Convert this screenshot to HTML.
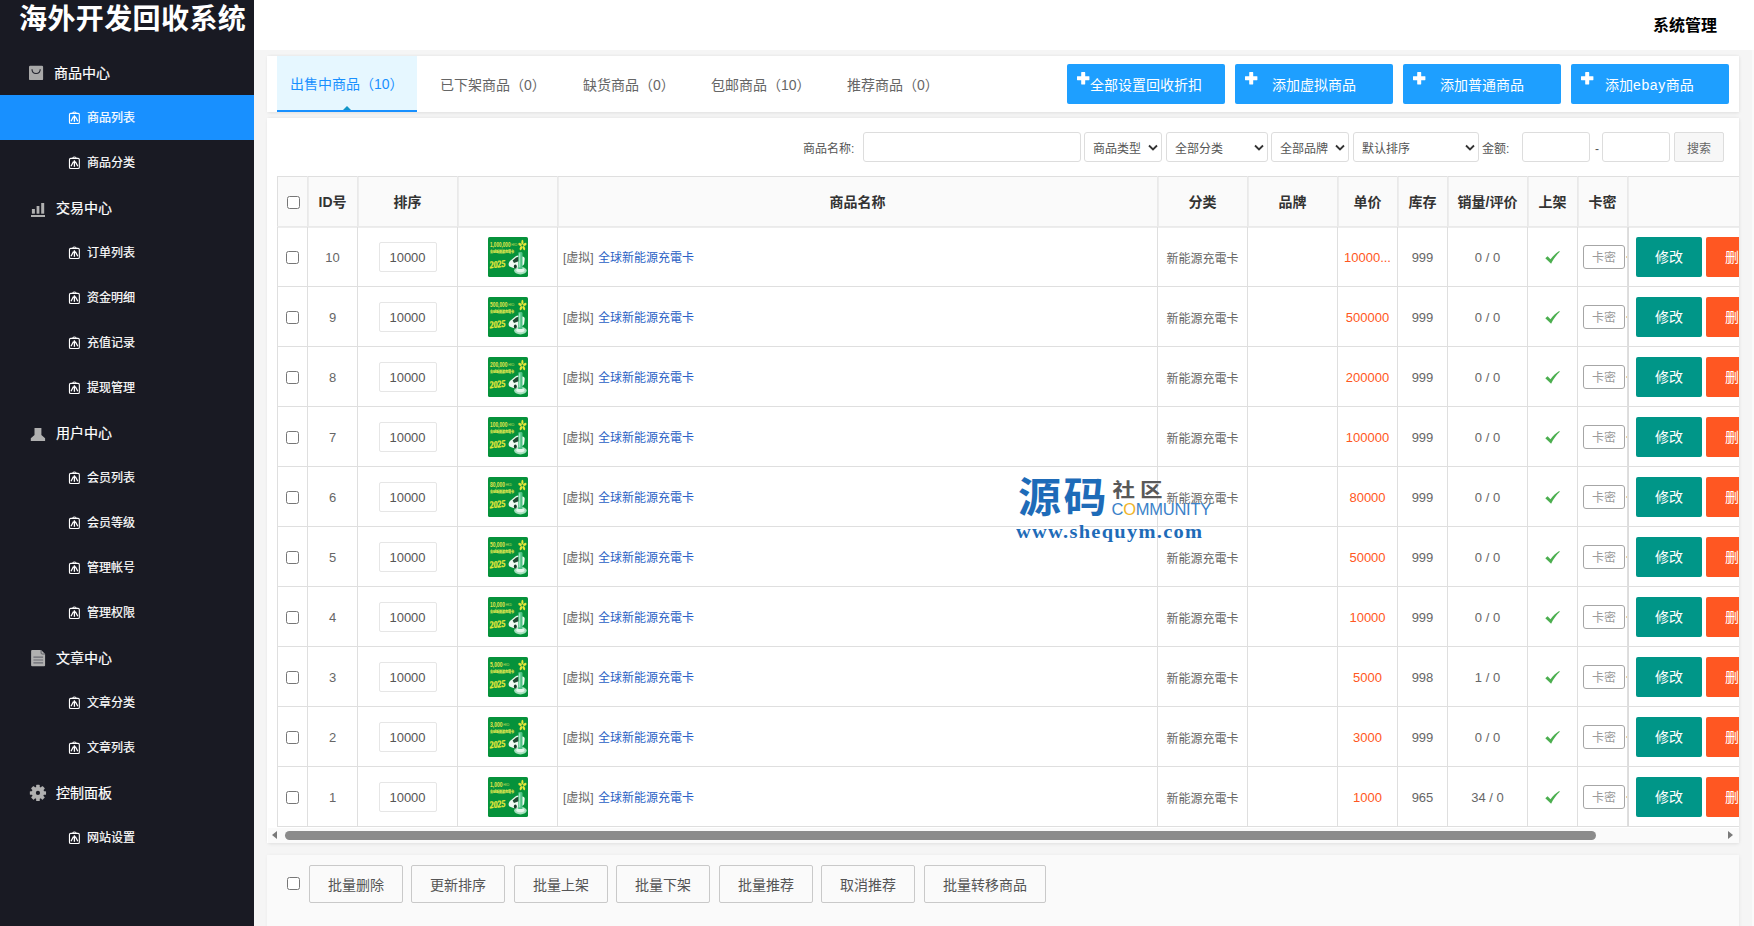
<!DOCTYPE html><html lang="zh-CN"><head><meta charset="utf-8"><title>海外开发回收系统</title><style>
*{box-sizing:border-box}
html,body{margin:0;padding:0}
body{width:1754px;height:926px;overflow:hidden;position:relative;background:#fff;font-family:"Liberation Sans","Noto Sans CJK SC",sans-serif;font-size:12px;color:#666}
.abs{position:absolute}
#side{left:0;top:0;width:254px;height:926px;background:#191a23;color:#fff}
#logo{left:19px;top:0px;font-size:28px;font-weight:bold;line-height:40px;white-space:nowrap;letter-spacing:0.4px}
.grp{left:0;width:254px;height:45px;line-height:45px;font-size:14px;color:#fff;-webkit-text-stroke:.2px #fff}
.grp span{position:absolute;left:56px;top:1px}
.grp svg{position:absolute;left:27px;top:12px}
.sub{left:0;width:254px;height:45px;line-height:45px;font-size:12px;color:#fff;-webkit-text-stroke:.2px #fff}
.sub span{position:absolute;left:87px;top:1px}
.sub svg{position:absolute;left:67px;top:15px}
.sub.on{background:#1890ff}
#top{left:254px;top:0;width:1500px;height:50px;background:#fff}
#top b{position:absolute;left:1399px;top:1px;line-height:50px;font-size:16px;color:#000}
#main{left:254px;top:50px;width:1498px;height:876px;background:#f5f5f5}
.panel{background:#fff;box-shadow:-1px 0 0 #fff,0 0 3px rgba(0,0,0,.05),0 1px 4px rgba(0,0,0,.07)}
.tab{top:0;height:56px;line-height:58px;font-size:14px;color:#666;white-space:nowrap}
.tab.on{background:#e6f7ff;color:#1890ff;border-bottom:2px solid #1890ff;line-height:57px}
.bbtn{top:8px;width:158px;height:40px;background:#1e9fff;border-radius:2px;color:#fff;font-size:14px;line-height:42px;white-space:nowrap}
.inp{height:30px;border:1px solid #ddd;border-radius:3px;background:#fff;top:14px}
.sel{height:30px;border:1px solid #ddd;border-radius:3px;background:#fff;top:14px;font-size:12px;color:#555;line-height:32px;padding-left:8px;white-space:nowrap}
.sel svg{position:absolute;right:3.5px;top:10.5px}
.lab{top:14px;line-height:34px;font-size:12px;color:#555;white-space:nowrap}
table{border-collapse:collapse;table-layout:fixed;position:absolute;left:9px;top:58px;width:1601px}
th,td{border:1px solid #dfdfdf;padding:0;text-align:center;font-size:13px;color:#666;overflow:hidden;white-space:nowrap}
th{height:50px;padding-bottom:2px;background:#fafafa;border-color:#dfdfdf #e9e9e9 #eaeaea #e9e9e9;box-shadow:inset 1px 0 0 #ededed;font-size:14px;font-weight:bold;color:#333}
td{height:60px;padding-top:2px}
td.w{padding-top:0}
th:first-child{border-left-color:#dfdfdf;box-shadow:none}
tr.r1 td{box-shadow:inset 0 1px 0 #ededed}
tr.r1 td.act{box-shadow:inset 1px 0 0 #dcdcdc,inset 0 1px 0 #ededed}
td.nm{text-align:left;padding-left:5px;font-size:12px;padding-top:0}
td.nm a{color:#2a5fc4;text-decoration:none;margin-left:1px}
td.pr{color:#ff5722}
td.cat{font-size:12px;padding-top:1px}
.cb{display:inline-block;width:13px;height:13px;border:1px solid #767676;border-radius:2.5px;background:#fff;vertical-align:middle}
.srt{display:inline-block;width:58px;height:30px;line-height:30px;border:1px solid #e6e6e6;border-radius:2px;font-size:13px;color:#555;vertical-align:middle}
.km{display:inline-block;width:42px;height:24px;line-height:24px;border:1px solid #a6a6a6;border-radius:3px;font-size:12px;color:#999;text-align:center;vertical-align:middle;background:#fff}
td.kmc{text-align:left;padding-left:5px;position:relative}
.dot{position:absolute;left:48px;top:29px;width:2px;height:2px;background:#e0c080;border-radius:1px}
td.act{text-align:left;padding-left:8px;padding-top:0;border-left-color:#d9d9d9;box-shadow:inset 1px 0 0 #dcdcdc}
.edit{display:inline-block;width:66px;height:40px;line-height:40px;background:#009688;color:#fff;font-size:14px;text-align:center;border-radius:2px;vertical-align:middle}
.del{display:inline-block;width:66px;height:40px;line-height:40px;background:#ff5722;color:#fff;font-size:14px;text-align:center;border-radius:2px;vertical-align:middle;margin-left:4px}
.pb{top:10px;height:38px;line-height:38px;border:1px solid #c9c9c9;border-radius:2px;font-size:14px;color:#555;text-align:center;white-space:nowrap}
</style></head><body><div id="side" class="abs"><div id="logo" class="abs">海外开发回收系统</div><div class="grp abs" style="top:50px"><svg width="22" height="22" viewBox="0 0 22 22"><rect x="2" y="3.8" width="14.1" height="14.3" rx="1.2" fill="#a9a9a9"/><path d="M5 7.300c0 5.600 8.200 5.600 8.200 0" fill="none" stroke="#22232d" stroke-width="1.100"/></svg><span style="left:54px">商品中心</span></div><div class="sub abs on" style="top:95px"><svg width="16" height="16" viewBox="0 0 16 16" fill="none" stroke="#fff" stroke-width="1.1"><rect x="2.45" y="3.35" width="9.9" height="10.1" rx="1.3"/><path d="M5.3 3.3c0-1.7 4.2-1.7 4.2 0" stroke-width="1"/><path d="M4 11.300l2.500-4.800M7.400 5.300v6.400M10.800 11.300l-2.500-4.800" stroke-width="1.300"/></svg><span>商品列表</span></div><div class="sub abs" style="top:140px"><svg width="16" height="16" viewBox="0 0 16 16" fill="none" stroke="#fff" stroke-width="1.1"><rect x="2.45" y="3.35" width="9.9" height="10.1" rx="1.3"/><path d="M5.3 3.3c0-1.7 4.2-1.7 4.2 0" stroke-width="1"/><path d="M4 11.300l2.500-4.800M7.400 5.300v6.400M10.800 11.300l-2.500-4.800" stroke-width="1.300"/></svg><span>商品分类</span></div><div class="grp abs" style="top:185px"><svg width="22" height="22" viewBox="0 0 22 22" fill="#b0b0b0"><rect x="4.9" y="12" width="3" height="4.7"/><rect x="9.6" y="9" width="2.8" height="7.7"/><rect x="14.2" y="6" width="3" height="10.7"/><rect x="4" y="18" width="14" height="2"/></svg><span>交易中心</span></div><div class="sub abs" style="top:230px"><svg width="16" height="16" viewBox="0 0 16 16" fill="none" stroke="#fff" stroke-width="1.1"><rect x="2.45" y="3.35" width="9.9" height="10.1" rx="1.3"/><path d="M5.3 3.3c0-1.7 4.2-1.7 4.2 0" stroke-width="1"/><path d="M4 11.300l2.500-4.800M7.400 5.300v6.400M10.800 11.300l-2.500-4.800" stroke-width="1.300"/></svg><span>订单列表</span></div><div class="sub abs" style="top:275px"><svg width="16" height="16" viewBox="0 0 16 16" fill="none" stroke="#fff" stroke-width="1.1"><rect x="2.45" y="3.35" width="9.9" height="10.1" rx="1.3"/><path d="M5.3 3.3c0-1.7 4.2-1.7 4.2 0" stroke-width="1"/><path d="M4 11.300l2.500-4.800M7.400 5.300v6.400M10.800 11.300l-2.500-4.800" stroke-width="1.300"/></svg><span>资金明细</span></div><div class="sub abs" style="top:320px"><svg width="16" height="16" viewBox="0 0 16 16" fill="none" stroke="#fff" stroke-width="1.1"><rect x="2.45" y="3.35" width="9.9" height="10.1" rx="1.3"/><path d="M5.3 3.3c0-1.7 4.2-1.7 4.2 0" stroke-width="1"/><path d="M4 11.300l2.500-4.800M7.400 5.300v6.400M10.800 11.300l-2.500-4.800" stroke-width="1.300"/></svg><span>充值记录</span></div><div class="sub abs" style="top:365px"><svg width="16" height="16" viewBox="0 0 16 16" fill="none" stroke="#fff" stroke-width="1.1"><rect x="2.45" y="3.35" width="9.9" height="10.1" rx="1.3"/><path d="M5.3 3.3c0-1.7 4.2-1.7 4.2 0" stroke-width="1"/><path d="M4 11.300l2.500-4.800M7.400 5.300v6.400M10.800 11.300l-2.500-4.800" stroke-width="1.300"/></svg><span>提现管理</span></div><div class="grp abs" style="top:410px"><svg width="22" height="22" viewBox="0 0 22 22" fill="#b0b0b0"><path d="M7.5 6h6.9v7l3.7 3.3V19H3.8v-2.7L7.5 13z"/></svg><span>用户中心</span></div><div class="sub abs" style="top:455px"><svg width="16" height="16" viewBox="0 0 16 16" fill="none" stroke="#fff" stroke-width="1.1"><rect x="2.45" y="3.35" width="9.9" height="10.1" rx="1.3"/><path d="M5.3 3.3c0-1.7 4.2-1.7 4.2 0" stroke-width="1"/><path d="M4 11.300l2.500-4.800M7.400 5.300v6.400M10.800 11.300l-2.500-4.800" stroke-width="1.300"/></svg><span>会员列表</span></div><div class="sub abs" style="top:500px"><svg width="16" height="16" viewBox="0 0 16 16" fill="none" stroke="#fff" stroke-width="1.1"><rect x="2.45" y="3.35" width="9.9" height="10.1" rx="1.3"/><path d="M5.3 3.3c0-1.7 4.2-1.7 4.2 0" stroke-width="1"/><path d="M4 11.300l2.500-4.800M7.400 5.300v6.400M10.800 11.300l-2.500-4.800" stroke-width="1.300"/></svg><span>会员等级</span></div><div class="sub abs" style="top:545px"><svg width="16" height="16" viewBox="0 0 16 16" fill="none" stroke="#fff" stroke-width="1.1"><rect x="2.45" y="3.35" width="9.9" height="10.1" rx="1.3"/><path d="M5.3 3.3c0-1.7 4.2-1.7 4.2 0" stroke-width="1"/><path d="M4 11.300l2.500-4.800M7.400 5.300v6.400M10.800 11.300l-2.500-4.800" stroke-width="1.300"/></svg><span>管理帐号</span></div><div class="sub abs" style="top:590px"><svg width="16" height="16" viewBox="0 0 16 16" fill="none" stroke="#fff" stroke-width="1.1"><rect x="2.45" y="3.35" width="9.9" height="10.1" rx="1.3"/><path d="M5.3 3.3c0-1.7 4.2-1.7 4.2 0" stroke-width="1"/><path d="M4 11.300l2.500-4.800M7.400 5.300v6.400M10.800 11.300l-2.500-4.800" stroke-width="1.300"/></svg><span>管理权限</span></div><div class="grp abs" style="top:635px"><svg width="22" height="22" viewBox="0 0 22 22"><path d="M4.1 4a1 1 0 0 1 1-1h9l4 4v11.2a1 1 0 0 1-1 1H5.1a1 1 0 0 1-1-1z" fill="#b0b0b0"/><path d="M14.1 3v3a1 1 0 0 0 1 1h3" fill="none" stroke="#55565e" stroke-width="0.9"/><path d="M6.4 10.2h9.7M6.4 13h9.7M6.4 15.8h9.7" stroke="#6a6b73" stroke-width="1.200"/></svg><span>文章中心</span></div><div class="sub abs" style="top:680px"><svg width="16" height="16" viewBox="0 0 16 16" fill="none" stroke="#fff" stroke-width="1.1"><rect x="2.45" y="3.35" width="9.9" height="10.1" rx="1.3"/><path d="M5.3 3.3c0-1.7 4.2-1.7 4.2 0" stroke-width="1"/><path d="M4 11.300l2.500-4.800M7.400 5.300v6.400M10.800 11.300l-2.500-4.800" stroke-width="1.300"/></svg><span>文章分类</span></div><div class="sub abs" style="top:725px"><svg width="16" height="16" viewBox="0 0 16 16" fill="none" stroke="#fff" stroke-width="1.1"><rect x="2.45" y="3.35" width="9.9" height="10.1" rx="1.3"/><path d="M5.3 3.3c0-1.7 4.2-1.7 4.2 0" stroke-width="1"/><path d="M4 11.300l2.500-4.800M7.400 5.300v6.400M10.800 11.300l-2.500-4.800" stroke-width="1.300"/></svg><span>文章列表</span></div><div class="grp abs" style="top:770px"><svg width="22" height="22" viewBox="0 0 22 22"><g fill="#b0b0b0"><circle cx="10.95" cy="10.95" r="6.2"/><rect x="9.15" y="2.850" width="3.600" height="16.200" rx="0.6"/><rect x="9.15" y="2.850" width="3.600" height="16.200" rx="0.6" transform="rotate(45 10.95 10.95)"/><rect x="9.15" y="2.850" width="3.600" height="16.200" rx="0.6" transform="rotate(90 10.95 10.95)"/><rect x="9.15" y="2.850" width="3.600" height="16.200" rx="0.6" transform="rotate(135 10.95 10.95)"/></g><circle cx="10.95" cy="10.95" r="2.1" fill="#191a23"/></svg><span>控制面板</span></div><div class="sub abs" style="top:815px"><svg width="16" height="16" viewBox="0 0 16 16" fill="none" stroke="#fff" stroke-width="1.1"><rect x="2.45" y="3.35" width="9.9" height="10.1" rx="1.3"/><path d="M5.3 3.3c0-1.7 4.2-1.7 4.2 0" stroke-width="1"/><path d="M4 11.300l2.500-4.800M7.400 5.300v6.400M10.800 11.300l-2.500-4.800" stroke-width="1.300"/></svg><span>网站设置</span></div></div><div id="top" class="abs"><b>系统管理</b></div><div id="main" class="abs"><div class="panel abs" style="left:14px;top:6px;width:1471px;height:56px"><div class="tab abs on" style="left:9px;width:140px;padding-left:13px">出售中商品（10）</div><div class="tab abs" style="left:159px;width:134px;padding-left:13px">已下架商品（0）</div><div class="tab abs" style="left:302px;width:120px;padding-left:13px">缺货商品（0）</div><div class="tab abs" style="left:430px;width:128px;padding-left:13px">包邮商品（10）</div><div class="tab abs" style="left:566px;width:120px;padding-left:13px">推荐商品（0）</div><div class="abs" style="left:75px;top:50px;width:0;height:0;border-left:4px solid transparent;border-right:4px solid transparent;border-bottom:4px solid #1296c8"></div><div class="bbtn abs" style="left:799px"><svg class="abs" style="left:9.8px;top:7.7px" width="13" height="13" viewBox="0 0 13 13"><path d="M4.2 0.4a.4.4 0 0 1 .4-.4h3.2a.4.4 0 0 1 .4.4v3.8h3.8a.4.4 0 0 1 .4.4v3.2a.4.4 0 0 1-.4.4H8.2v3.8a.4.4 0 0 1-.4.4H4.6a.4.4 0 0 1-.4-.4V8.2H.4a.4.4 0 0 1-.4-.4V4.6a.4.4 0 0 1 .4-.4h3.8z" fill="#fff"/></svg><span class="abs" style="left:23px;top:0">全部设置回收折扣</span></div><div class="bbtn abs" style="left:967px"><svg class="abs" style="left:9.8px;top:7.7px" width="13" height="13" viewBox="0 0 13 13"><path d="M4.2 0.4a.4.4 0 0 1 .4-.4h3.2a.4.4 0 0 1 .4.4v3.8h3.8a.4.4 0 0 1 .4.4v3.2a.4.4 0 0 1-.4.4H8.2v3.8a.4.4 0 0 1-.4.4H4.6a.4.4 0 0 1-.4-.4V8.2H.4a.4.4 0 0 1-.4-.4V4.6a.4.4 0 0 1 .4-.4h3.8z" fill="#fff"/></svg><span class="abs" style="left:37px;top:0">添加虚拟商品</span></div><div class="bbtn abs" style="left:1135px"><svg class="abs" style="left:9.8px;top:7.7px" width="13" height="13" viewBox="0 0 13 13"><path d="M4.2 0.4a.4.4 0 0 1 .4-.4h3.2a.4.4 0 0 1 .4.4v3.8h3.8a.4.4 0 0 1 .4.4v3.2a.4.4 0 0 1-.4.4H8.2v3.8a.4.4 0 0 1-.4.4H4.6a.4.4 0 0 1-.4-.4V8.2H.4a.4.4 0 0 1-.4-.4V4.6a.4.4 0 0 1 .4-.4h3.8z" fill="#fff"/></svg><span class="abs" style="left:37px;top:0">添加普通商品</span></div><div class="bbtn abs" style="left:1303px"><svg class="abs" style="left:9.8px;top:7.7px" width="13" height="13" viewBox="0 0 13 13"><path d="M4.2 0.4a.4.4 0 0 1 .4-.4h3.2a.4.4 0 0 1 .4.4v3.8h3.8a.4.4 0 0 1 .4.4v3.2a.4.4 0 0 1-.4.4H8.2v3.8a.4.4 0 0 1-.4.4H4.6a.4.4 0 0 1-.4-.4V8.2H.4a.4.4 0 0 1-.4-.4V4.6a.4.4 0 0 1 .4-.4h3.8z" fill="#fff"/></svg><span class="abs" style="left:34px;top:0">添加<span style="letter-spacing:.6px">ebay</span>商品</span></div></div><div class="panel abs" style="left:14px;top:68px;width:1471px;height:725px;overflow:hidden"><div class="lab abs" style="left:535px">商品名称:</div><div class="inp abs" style="left:595px;width:218px"></div><div class="sel abs" style="left:816px;width:78px">商品类型<svg width="10" height="8" viewBox="0 0 10 8"><path d="M1 1.5l4 4 4-4" fill="none" stroke="#333" stroke-width="1.8"/></svg></div><div class="sel abs" style="left:898px;width:102px">全部分类<svg width="10" height="8" viewBox="0 0 10 8"><path d="M1 1.5l4 4 4-4" fill="none" stroke="#333" stroke-width="1.8"/></svg></div><div class="sel abs" style="left:1003px;width:78px">全部品牌<svg width="10" height="8" viewBox="0 0 10 8"><path d="M1 1.5l4 4 4-4" fill="none" stroke="#333" stroke-width="1.8"/></svg></div><div class="sel abs" style="left:1085px;width:126px">默认排序<svg width="10" height="8" viewBox="0 0 10 8"><path d="M1 1.5l4 4 4-4" fill="none" stroke="#333" stroke-width="1.8"/></svg></div><div class="lab abs" style="left:1214px">金额:</div><div class="inp abs" style="left:1254px;width:68px"></div><div class="lab abs" style="left:1327px">-</div><div class="inp abs" style="left:1334px;width:68px"></div><div class="abs" style="left:1406px;top:14px;width:50px;height:30px;line-height:32px;border:1px solid #ddd;border-radius:2px;background:#f7f7f7;color:#666;font-size:12px;text-align:center">搜索</div><table><colgroup><col style="width:30px"><col style="width:50px"><col style="width:100px"><col style="width:100px"><col style="width:600px"><col style="width:90px"><col style="width:90px"><col style="width:60px"><col style="width:50px"><col style="width:80px"><col style="width:50px"><col style="width:50px"><col style="width:250px"></colgroup><tr><th><i class="cb" style="margin-left:1px;position:relative;top:1px"></i></th><th>ID号</th><th>排序</th><th></th><th>商品名称</th><th>分类</th><th>品牌</th><th>单价</th><th>库存</th><th>销量/评价</th><th>上架</th><th>卡密</th><th></th></tr><tr class="r1"><td class="w"><i class="cb"></i></td><td>10</td><td class="w"><span class="srt">10000</span></td><td class="w"><svg width="40" height="40" viewBox="0 0 40 40" style="vertical-align:middle"><rect width="40" height="40" rx="1.6" fill="#06923b"/><text x="2" y="9.6" font-size="6.6" font-weight="bold" fill="#e3e84c" font-family="Liberation Sans,sans-serif" textLength="20.5" lengthAdjust="spacingAndGlyphs">1,000,000</text><text x="23.3" y="9.4" font-size="3.4" fill="#cfe05a" font-family="Liberation Sans,sans-serif" textLength="6" lengthAdjust="spacingAndGlyphs">HKD</text><g transform="translate(2 15.6) scale(.5)"><text x="0" y="0" font-size="6.4" font-weight="bold" fill="#e0e850" stroke="#e0e850" stroke-width=".3" font-family="Noto Sans CJK SC,sans-serif" textLength="48" lengthAdjust="spacingAndGlyphs">全球新能源充電卡</text></g><g fill="#e4e63c" transform="translate(34.4 8.4) scale(.82 1.08) translate(-34.4 -8.4)"><ellipse cx="34.4" cy="5.6" rx="1.3" ry="2.4"/><ellipse cx="34.4" cy="5.6" rx="1.3" ry="2.4" transform="rotate(72 34.4 8.4)"/><ellipse cx="34.4" cy="5.6" rx="1.3" ry="2.4" transform="rotate(144 34.4 8.4)"/><ellipse cx="34.4" cy="5.6" rx="1.3" ry="2.4" transform="rotate(216 34.4 8.4)"/><ellipse cx="34.4" cy="5.6" rx="1.3" ry="2.4" transform="rotate(288 34.4 8.4)"/></g><circle cx="34.4" cy="8.4" r="1" fill="#06923b"/><text x="1.6" y="30.6" font-size="10" font-weight="bold" font-style="italic" fill="#e9ea3a" stroke="#e9ea3a" stroke-width=".35" font-family="Liberation Serif,serif" textLength="15.8" lengthAdjust="spacingAndGlyphs" transform="rotate(-6 9 27)">2025</text><ellipse cx="32.4" cy="33.6" rx="6.3" ry="3.8" fill="#a9e0bf"/><ellipse cx="32.4" cy="33.2" rx="4" ry="2.1" fill="#e6f6ec"/><path d="M20.6 27.5c0-2 1-3.6 2.6-4.6l4.2-3.4c1.2-.9 2.8-1.2 4.2-.8l3.6 1c1 .3 1.6 1.2 1.5 2.2l-.5 4.6c-.1 1-.8 1.900-1.800 2.200l-6 2.200c-1.200.4-2.500.4-3.700-.1l-2.600-1c-.9-.4-1.500-1.300-1.500-2.300z" fill="#eef8f1"/><path d="M24.600 23.400l3.500-2.800c.7-.5 1.600-.7 2.400-.5l1.300.4-.6 3.600-5.200 2z" fill="#1f4a33"/><ellipse cx="27.300" cy="29.400" rx="1.500" ry="2" fill="#173c28"/><path d="M30.200 16.400c0-.8.600-1.400 1.400-1.400h1.500c.8 0 1.400.6 1.400 1.400V32h-4.300z" fill="#4fc184"/><rect x="31" y="16.300" width="1.300" height="14" fill="#9be3bb"/></svg></td><td class="nm">[虚拟] <a>全球新能源充電卡</a></td><td class="cat">新能源充電卡</td><td></td><td class="pr">10000...</td><td>999</td><td>0 / 0</td><td class="w"><svg width="15" height="13" viewBox="0 0 15 13" style="vertical-align:middle"><path d="M0.3 7.300l2.300-2 2.900 2.900C8 5 11 2.100 14.200 0.100l.6.700C11.400 4 8.400 8.200 6.100 12.700z" fill="#4caf50"/></svg></td><td class="w kmc"><span class="km">卡密</span><i class="dot"></i></td><td class="act"><span class="edit">修改</span><span class="del">删除</span></td></tr><tr><td class="w"><i class="cb"></i></td><td>9</td><td class="w"><span class="srt">10000</span></td><td class="w"><svg width="40" height="40" viewBox="0 0 40 40" style="vertical-align:middle"><rect width="40" height="40" rx="1.6" fill="#06923b"/><text x="2" y="9.6" font-size="6.6" font-weight="bold" fill="#e3e84c" font-family="Liberation Sans,sans-serif" textLength="17.5" lengthAdjust="spacingAndGlyphs">500,000</text><text x="20.3" y="9.4" font-size="3.4" fill="#cfe05a" font-family="Liberation Sans,sans-serif" textLength="6" lengthAdjust="spacingAndGlyphs">HKD</text><g transform="translate(2 15.6) scale(.5)"><text x="0" y="0" font-size="6.4" font-weight="bold" fill="#e0e850" stroke="#e0e850" stroke-width=".3" font-family="Noto Sans CJK SC,sans-serif" textLength="48" lengthAdjust="spacingAndGlyphs">全球新能源充電卡</text></g><g fill="#e4e63c" transform="translate(34.4 8.4) scale(.82 1.08) translate(-34.4 -8.4)"><ellipse cx="34.4" cy="5.6" rx="1.3" ry="2.4"/><ellipse cx="34.4" cy="5.6" rx="1.3" ry="2.4" transform="rotate(72 34.4 8.4)"/><ellipse cx="34.4" cy="5.6" rx="1.3" ry="2.4" transform="rotate(144 34.4 8.4)"/><ellipse cx="34.4" cy="5.6" rx="1.3" ry="2.4" transform="rotate(216 34.4 8.4)"/><ellipse cx="34.4" cy="5.6" rx="1.3" ry="2.4" transform="rotate(288 34.4 8.4)"/></g><circle cx="34.4" cy="8.4" r="1" fill="#06923b"/><text x="1.6" y="30.6" font-size="10" font-weight="bold" font-style="italic" fill="#e9ea3a" stroke="#e9ea3a" stroke-width=".35" font-family="Liberation Serif,serif" textLength="15.8" lengthAdjust="spacingAndGlyphs" transform="rotate(-6 9 27)">2025</text><ellipse cx="32.4" cy="33.6" rx="6.3" ry="3.8" fill="#a9e0bf"/><ellipse cx="32.4" cy="33.2" rx="4" ry="2.1" fill="#e6f6ec"/><path d="M20.6 27.5c0-2 1-3.6 2.6-4.6l4.2-3.4c1.2-.9 2.8-1.2 4.2-.8l3.6 1c1 .3 1.6 1.2 1.5 2.2l-.5 4.6c-.1 1-.8 1.900-1.800 2.200l-6 2.200c-1.200.4-2.500.4-3.700-.1l-2.600-1c-.9-.4-1.500-1.300-1.500-2.300z" fill="#eef8f1"/><path d="M24.600 23.400l3.500-2.800c.7-.5 1.600-.7 2.400-.5l1.300.4-.6 3.600-5.200 2z" fill="#1f4a33"/><ellipse cx="27.300" cy="29.400" rx="1.500" ry="2" fill="#173c28"/><path d="M30.200 16.400c0-.8.600-1.400 1.400-1.400h1.500c.8 0 1.400.6 1.400 1.400V32h-4.300z" fill="#4fc184"/><rect x="31" y="16.300" width="1.300" height="14" fill="#9be3bb"/></svg></td><td class="nm">[虚拟] <a>全球新能源充電卡</a></td><td class="cat">新能源充電卡</td><td></td><td class="pr">500000</td><td>999</td><td>0 / 0</td><td class="w"><svg width="15" height="13" viewBox="0 0 15 13" style="vertical-align:middle"><path d="M0.3 7.300l2.300-2 2.900 2.900C8 5 11 2.100 14.200 0.100l.6.700C11.400 4 8.400 8.200 6.100 12.700z" fill="#4caf50"/></svg></td><td class="w kmc"><span class="km">卡密</span><i class="dot"></i></td><td class="act"><span class="edit">修改</span><span class="del">删除</span></td></tr><tr><td class="w"><i class="cb"></i></td><td>8</td><td class="w"><span class="srt">10000</span></td><td class="w"><svg width="40" height="40" viewBox="0 0 40 40" style="vertical-align:middle"><rect width="40" height="40" rx="1.6" fill="#06923b"/><text x="2" y="9.6" font-size="6.6" font-weight="bold" fill="#e3e84c" font-family="Liberation Sans,sans-serif" textLength="17.5" lengthAdjust="spacingAndGlyphs">200,000</text><text x="20.3" y="9.4" font-size="3.4" fill="#cfe05a" font-family="Liberation Sans,sans-serif" textLength="6" lengthAdjust="spacingAndGlyphs">HKD</text><g transform="translate(2 15.6) scale(.5)"><text x="0" y="0" font-size="6.4" font-weight="bold" fill="#e0e850" stroke="#e0e850" stroke-width=".3" font-family="Noto Sans CJK SC,sans-serif" textLength="48" lengthAdjust="spacingAndGlyphs">全球新能源充電卡</text></g><g fill="#e4e63c" transform="translate(34.4 8.4) scale(.82 1.08) translate(-34.4 -8.4)"><ellipse cx="34.4" cy="5.6" rx="1.3" ry="2.4"/><ellipse cx="34.4" cy="5.6" rx="1.3" ry="2.4" transform="rotate(72 34.4 8.4)"/><ellipse cx="34.4" cy="5.6" rx="1.3" ry="2.4" transform="rotate(144 34.4 8.4)"/><ellipse cx="34.4" cy="5.6" rx="1.3" ry="2.4" transform="rotate(216 34.4 8.4)"/><ellipse cx="34.4" cy="5.6" rx="1.3" ry="2.4" transform="rotate(288 34.4 8.4)"/></g><circle cx="34.4" cy="8.4" r="1" fill="#06923b"/><text x="1.6" y="30.6" font-size="10" font-weight="bold" font-style="italic" fill="#e9ea3a" stroke="#e9ea3a" stroke-width=".35" font-family="Liberation Serif,serif" textLength="15.8" lengthAdjust="spacingAndGlyphs" transform="rotate(-6 9 27)">2025</text><ellipse cx="32.4" cy="33.6" rx="6.3" ry="3.8" fill="#a9e0bf"/><ellipse cx="32.4" cy="33.2" rx="4" ry="2.1" fill="#e6f6ec"/><path d="M20.6 27.5c0-2 1-3.6 2.6-4.6l4.2-3.4c1.2-.9 2.8-1.2 4.2-.8l3.6 1c1 .3 1.6 1.2 1.5 2.2l-.5 4.6c-.1 1-.8 1.900-1.800 2.200l-6 2.200c-1.200.4-2.500.4-3.700-.1l-2.600-1c-.9-.4-1.500-1.300-1.500-2.300z" fill="#eef8f1"/><path d="M24.600 23.400l3.500-2.800c.7-.5 1.600-.7 2.400-.5l1.300.4-.6 3.600-5.200 2z" fill="#1f4a33"/><ellipse cx="27.300" cy="29.400" rx="1.500" ry="2" fill="#173c28"/><path d="M30.200 16.400c0-.8.600-1.400 1.400-1.400h1.500c.8 0 1.400.6 1.400 1.400V32h-4.300z" fill="#4fc184"/><rect x="31" y="16.300" width="1.300" height="14" fill="#9be3bb"/></svg></td><td class="nm">[虚拟] <a>全球新能源充電卡</a></td><td class="cat">新能源充電卡</td><td></td><td class="pr">200000</td><td>999</td><td>0 / 0</td><td class="w"><svg width="15" height="13" viewBox="0 0 15 13" style="vertical-align:middle"><path d="M0.3 7.300l2.300-2 2.900 2.900C8 5 11 2.100 14.200 0.100l.6.700C11.400 4 8.400 8.200 6.100 12.700z" fill="#4caf50"/></svg></td><td class="w kmc"><span class="km">卡密</span><i class="dot"></i></td><td class="act"><span class="edit">修改</span><span class="del">删除</span></td></tr><tr><td class="w"><i class="cb"></i></td><td>7</td><td class="w"><span class="srt">10000</span></td><td class="w"><svg width="40" height="40" viewBox="0 0 40 40" style="vertical-align:middle"><rect width="40" height="40" rx="1.6" fill="#06923b"/><text x="2" y="9.6" font-size="6.6" font-weight="bold" fill="#e3e84c" font-family="Liberation Sans,sans-serif" textLength="17.5" lengthAdjust="spacingAndGlyphs">100,000</text><text x="20.3" y="9.4" font-size="3.4" fill="#cfe05a" font-family="Liberation Sans,sans-serif" textLength="6" lengthAdjust="spacingAndGlyphs">HKD</text><g transform="translate(2 15.6) scale(.5)"><text x="0" y="0" font-size="6.4" font-weight="bold" fill="#e0e850" stroke="#e0e850" stroke-width=".3" font-family="Noto Sans CJK SC,sans-serif" textLength="48" lengthAdjust="spacingAndGlyphs">全球新能源充電卡</text></g><g fill="#e4e63c" transform="translate(34.4 8.4) scale(.82 1.08) translate(-34.4 -8.4)"><ellipse cx="34.4" cy="5.6" rx="1.3" ry="2.4"/><ellipse cx="34.4" cy="5.6" rx="1.3" ry="2.4" transform="rotate(72 34.4 8.4)"/><ellipse cx="34.4" cy="5.6" rx="1.3" ry="2.4" transform="rotate(144 34.4 8.4)"/><ellipse cx="34.4" cy="5.6" rx="1.3" ry="2.4" transform="rotate(216 34.4 8.4)"/><ellipse cx="34.4" cy="5.6" rx="1.3" ry="2.4" transform="rotate(288 34.4 8.4)"/></g><circle cx="34.4" cy="8.4" r="1" fill="#06923b"/><text x="1.6" y="30.6" font-size="10" font-weight="bold" font-style="italic" fill="#e9ea3a" stroke="#e9ea3a" stroke-width=".35" font-family="Liberation Serif,serif" textLength="15.8" lengthAdjust="spacingAndGlyphs" transform="rotate(-6 9 27)">2025</text><ellipse cx="32.4" cy="33.6" rx="6.3" ry="3.8" fill="#a9e0bf"/><ellipse cx="32.4" cy="33.2" rx="4" ry="2.1" fill="#e6f6ec"/><path d="M20.6 27.5c0-2 1-3.6 2.6-4.6l4.2-3.4c1.2-.9 2.8-1.2 4.2-.8l3.6 1c1 .3 1.6 1.2 1.5 2.2l-.5 4.6c-.1 1-.8 1.900-1.800 2.200l-6 2.200c-1.200.4-2.500.4-3.700-.1l-2.600-1c-.9-.4-1.500-1.300-1.500-2.300z" fill="#eef8f1"/><path d="M24.600 23.400l3.500-2.800c.7-.5 1.600-.7 2.400-.5l1.300.4-.6 3.600-5.200 2z" fill="#1f4a33"/><ellipse cx="27.300" cy="29.400" rx="1.500" ry="2" fill="#173c28"/><path d="M30.200 16.400c0-.8.600-1.400 1.400-1.400h1.500c.8 0 1.400.6 1.400 1.400V32h-4.300z" fill="#4fc184"/><rect x="31" y="16.300" width="1.300" height="14" fill="#9be3bb"/></svg></td><td class="nm">[虚拟] <a>全球新能源充電卡</a></td><td class="cat">新能源充電卡</td><td></td><td class="pr">100000</td><td>999</td><td>0 / 0</td><td class="w"><svg width="15" height="13" viewBox="0 0 15 13" style="vertical-align:middle"><path d="M0.3 7.300l2.300-2 2.900 2.900C8 5 11 2.100 14.200 0.100l.6.700C11.400 4 8.400 8.200 6.100 12.700z" fill="#4caf50"/></svg></td><td class="w kmc"><span class="km">卡密</span><i class="dot"></i></td><td class="act"><span class="edit">修改</span><span class="del">删除</span></td></tr><tr><td class="w"><i class="cb"></i></td><td>6</td><td class="w"><span class="srt">10000</span></td><td class="w"><svg width="40" height="40" viewBox="0 0 40 40" style="vertical-align:middle"><rect width="40" height="40" rx="1.6" fill="#06923b"/><text x="2" y="9.6" font-size="6.6" font-weight="bold" fill="#e3e84c" font-family="Liberation Sans,sans-serif" textLength="15.0" lengthAdjust="spacingAndGlyphs">80,000</text><text x="17.8" y="9.4" font-size="3.4" fill="#cfe05a" font-family="Liberation Sans,sans-serif" textLength="6" lengthAdjust="spacingAndGlyphs">HKD</text><g transform="translate(2 15.6) scale(.5)"><text x="0" y="0" font-size="6.4" font-weight="bold" fill="#e0e850" stroke="#e0e850" stroke-width=".3" font-family="Noto Sans CJK SC,sans-serif" textLength="48" lengthAdjust="spacingAndGlyphs">全球新能源充電卡</text></g><g fill="#e4e63c" transform="translate(34.4 8.4) scale(.82 1.08) translate(-34.4 -8.4)"><ellipse cx="34.4" cy="5.6" rx="1.3" ry="2.4"/><ellipse cx="34.4" cy="5.6" rx="1.3" ry="2.4" transform="rotate(72 34.4 8.4)"/><ellipse cx="34.4" cy="5.6" rx="1.3" ry="2.4" transform="rotate(144 34.4 8.4)"/><ellipse cx="34.4" cy="5.6" rx="1.3" ry="2.4" transform="rotate(216 34.4 8.4)"/><ellipse cx="34.4" cy="5.6" rx="1.3" ry="2.4" transform="rotate(288 34.4 8.4)"/></g><circle cx="34.4" cy="8.4" r="1" fill="#06923b"/><text x="1.6" y="30.6" font-size="10" font-weight="bold" font-style="italic" fill="#e9ea3a" stroke="#e9ea3a" stroke-width=".35" font-family="Liberation Serif,serif" textLength="15.8" lengthAdjust="spacingAndGlyphs" transform="rotate(-6 9 27)">2025</text><ellipse cx="32.4" cy="33.6" rx="6.3" ry="3.8" fill="#a9e0bf"/><ellipse cx="32.4" cy="33.2" rx="4" ry="2.1" fill="#e6f6ec"/><path d="M20.6 27.5c0-2 1-3.6 2.6-4.6l4.2-3.4c1.2-.9 2.8-1.2 4.2-.8l3.6 1c1 .3 1.6 1.2 1.5 2.2l-.5 4.6c-.1 1-.8 1.900-1.800 2.200l-6 2.200c-1.200.4-2.500.4-3.700-.1l-2.600-1c-.9-.4-1.500-1.300-1.500-2.300z" fill="#eef8f1"/><path d="M24.600 23.400l3.500-2.800c.7-.5 1.600-.7 2.400-.5l1.300.4-.6 3.600-5.200 2z" fill="#1f4a33"/><ellipse cx="27.300" cy="29.400" rx="1.500" ry="2" fill="#173c28"/><path d="M30.200 16.400c0-.8.600-1.400 1.400-1.400h1.500c.8 0 1.400.6 1.400 1.400V32h-4.300z" fill="#4fc184"/><rect x="31" y="16.300" width="1.300" height="14" fill="#9be3bb"/></svg></td><td class="nm">[虚拟] <a>全球新能源充電卡</a></td><td class="cat">新能源充電卡</td><td></td><td class="pr">80000</td><td>999</td><td>0 / 0</td><td class="w"><svg width="15" height="13" viewBox="0 0 15 13" style="vertical-align:middle"><path d="M0.3 7.300l2.300-2 2.900 2.900C8 5 11 2.100 14.200 0.100l.6.700C11.400 4 8.400 8.200 6.100 12.700z" fill="#4caf50"/></svg></td><td class="w kmc"><span class="km">卡密</span><i class="dot"></i></td><td class="act"><span class="edit">修改</span><span class="del">删除</span></td></tr><tr><td class="w"><i class="cb"></i></td><td>5</td><td class="w"><span class="srt">10000</span></td><td class="w"><svg width="40" height="40" viewBox="0 0 40 40" style="vertical-align:middle"><rect width="40" height="40" rx="1.6" fill="#06923b"/><text x="2" y="9.6" font-size="6.6" font-weight="bold" fill="#e3e84c" font-family="Liberation Sans,sans-serif" textLength="15.0" lengthAdjust="spacingAndGlyphs">50,000</text><text x="17.8" y="9.4" font-size="3.4" fill="#cfe05a" font-family="Liberation Sans,sans-serif" textLength="6" lengthAdjust="spacingAndGlyphs">HKD</text><g transform="translate(2 15.6) scale(.5)"><text x="0" y="0" font-size="6.4" font-weight="bold" fill="#e0e850" stroke="#e0e850" stroke-width=".3" font-family="Noto Sans CJK SC,sans-serif" textLength="48" lengthAdjust="spacingAndGlyphs">全球新能源充電卡</text></g><g fill="#e4e63c" transform="translate(34.4 8.4) scale(.82 1.08) translate(-34.4 -8.4)"><ellipse cx="34.4" cy="5.6" rx="1.3" ry="2.4"/><ellipse cx="34.4" cy="5.6" rx="1.3" ry="2.4" transform="rotate(72 34.4 8.4)"/><ellipse cx="34.4" cy="5.6" rx="1.3" ry="2.4" transform="rotate(144 34.4 8.4)"/><ellipse cx="34.4" cy="5.6" rx="1.3" ry="2.4" transform="rotate(216 34.4 8.4)"/><ellipse cx="34.4" cy="5.6" rx="1.3" ry="2.4" transform="rotate(288 34.4 8.4)"/></g><circle cx="34.4" cy="8.4" r="1" fill="#06923b"/><text x="1.6" y="30.6" font-size="10" font-weight="bold" font-style="italic" fill="#e9ea3a" stroke="#e9ea3a" stroke-width=".35" font-family="Liberation Serif,serif" textLength="15.8" lengthAdjust="spacingAndGlyphs" transform="rotate(-6 9 27)">2025</text><ellipse cx="32.4" cy="33.6" rx="6.3" ry="3.8" fill="#a9e0bf"/><ellipse cx="32.4" cy="33.2" rx="4" ry="2.1" fill="#e6f6ec"/><path d="M20.6 27.5c0-2 1-3.6 2.6-4.6l4.2-3.4c1.2-.9 2.8-1.2 4.2-.8l3.6 1c1 .3 1.6 1.2 1.5 2.2l-.5 4.6c-.1 1-.8 1.900-1.800 2.200l-6 2.200c-1.200.4-2.500.4-3.700-.1l-2.600-1c-.9-.4-1.500-1.300-1.500-2.300z" fill="#eef8f1"/><path d="M24.600 23.400l3.500-2.800c.7-.5 1.600-.7 2.400-.5l1.300.4-.6 3.600-5.200 2z" fill="#1f4a33"/><ellipse cx="27.300" cy="29.400" rx="1.500" ry="2" fill="#173c28"/><path d="M30.200 16.400c0-.8.600-1.400 1.400-1.400h1.500c.8 0 1.400.6 1.400 1.400V32h-4.300z" fill="#4fc184"/><rect x="31" y="16.300" width="1.300" height="14" fill="#9be3bb"/></svg></td><td class="nm">[虚拟] <a>全球新能源充電卡</a></td><td class="cat">新能源充電卡</td><td></td><td class="pr">50000</td><td>999</td><td>0 / 0</td><td class="w"><svg width="15" height="13" viewBox="0 0 15 13" style="vertical-align:middle"><path d="M0.3 7.300l2.300-2 2.900 2.900C8 5 11 2.100 14.200 0.100l.6.700C11.400 4 8.400 8.200 6.100 12.700z" fill="#4caf50"/></svg></td><td class="w kmc"><span class="km">卡密</span><i class="dot"></i></td><td class="act"><span class="edit">修改</span><span class="del">删除</span></td></tr><tr><td class="w"><i class="cb"></i></td><td>4</td><td class="w"><span class="srt">10000</span></td><td class="w"><svg width="40" height="40" viewBox="0 0 40 40" style="vertical-align:middle"><rect width="40" height="40" rx="1.6" fill="#06923b"/><text x="2" y="9.6" font-size="6.6" font-weight="bold" fill="#e3e84c" font-family="Liberation Sans,sans-serif" textLength="15.0" lengthAdjust="spacingAndGlyphs">10,000</text><text x="17.8" y="9.4" font-size="3.4" fill="#cfe05a" font-family="Liberation Sans,sans-serif" textLength="6" lengthAdjust="spacingAndGlyphs">HKD</text><g transform="translate(2 15.6) scale(.5)"><text x="0" y="0" font-size="6.4" font-weight="bold" fill="#e0e850" stroke="#e0e850" stroke-width=".3" font-family="Noto Sans CJK SC,sans-serif" textLength="48" lengthAdjust="spacingAndGlyphs">全球新能源充電卡</text></g><g fill="#e4e63c" transform="translate(34.4 8.4) scale(.82 1.08) translate(-34.4 -8.4)"><ellipse cx="34.4" cy="5.6" rx="1.3" ry="2.4"/><ellipse cx="34.4" cy="5.6" rx="1.3" ry="2.4" transform="rotate(72 34.4 8.4)"/><ellipse cx="34.4" cy="5.6" rx="1.3" ry="2.4" transform="rotate(144 34.4 8.4)"/><ellipse cx="34.4" cy="5.6" rx="1.3" ry="2.4" transform="rotate(216 34.4 8.4)"/><ellipse cx="34.4" cy="5.6" rx="1.3" ry="2.4" transform="rotate(288 34.4 8.4)"/></g><circle cx="34.4" cy="8.4" r="1" fill="#06923b"/><text x="1.6" y="30.6" font-size="10" font-weight="bold" font-style="italic" fill="#e9ea3a" stroke="#e9ea3a" stroke-width=".35" font-family="Liberation Serif,serif" textLength="15.8" lengthAdjust="spacingAndGlyphs" transform="rotate(-6 9 27)">2025</text><ellipse cx="32.4" cy="33.6" rx="6.3" ry="3.8" fill="#a9e0bf"/><ellipse cx="32.4" cy="33.2" rx="4" ry="2.1" fill="#e6f6ec"/><path d="M20.6 27.5c0-2 1-3.6 2.6-4.6l4.2-3.4c1.2-.9 2.8-1.2 4.2-.8l3.6 1c1 .3 1.6 1.2 1.5 2.2l-.5 4.6c-.1 1-.8 1.900-1.800 2.200l-6 2.200c-1.200.4-2.500.4-3.700-.1l-2.600-1c-.9-.4-1.500-1.300-1.500-2.300z" fill="#eef8f1"/><path d="M24.600 23.400l3.500-2.800c.7-.5 1.600-.7 2.400-.5l1.300.4-.6 3.600-5.200 2z" fill="#1f4a33"/><ellipse cx="27.300" cy="29.400" rx="1.500" ry="2" fill="#173c28"/><path d="M30.200 16.400c0-.8.600-1.400 1.400-1.400h1.500c.8 0 1.400.6 1.400 1.400V32h-4.300z" fill="#4fc184"/><rect x="31" y="16.300" width="1.300" height="14" fill="#9be3bb"/></svg></td><td class="nm">[虚拟] <a>全球新能源充電卡</a></td><td class="cat">新能源充電卡</td><td></td><td class="pr">10000</td><td>999</td><td>0 / 0</td><td class="w"><svg width="15" height="13" viewBox="0 0 15 13" style="vertical-align:middle"><path d="M0.3 7.300l2.300-2 2.900 2.900C8 5 11 2.100 14.200 0.100l.6.700C11.400 4 8.400 8.200 6.100 12.700z" fill="#4caf50"/></svg></td><td class="w kmc"><span class="km">卡密</span><i class="dot"></i></td><td class="act"><span class="edit">修改</span><span class="del">删除</span></td></tr><tr><td class="w"><i class="cb"></i></td><td>3</td><td class="w"><span class="srt">10000</span></td><td class="w"><svg width="40" height="40" viewBox="0 0 40 40" style="vertical-align:middle"><rect width="40" height="40" rx="1.6" fill="#06923b"/><text x="2" y="9.6" font-size="6.6" font-weight="bold" fill="#e3e84c" font-family="Liberation Sans,sans-serif" textLength="12.5" lengthAdjust="spacingAndGlyphs">5,000</text><text x="15.3" y="9.4" font-size="3.4" fill="#cfe05a" font-family="Liberation Sans,sans-serif" textLength="6" lengthAdjust="spacingAndGlyphs">HKD</text><g transform="translate(2 15.6) scale(.5)"><text x="0" y="0" font-size="6.4" font-weight="bold" fill="#e0e850" stroke="#e0e850" stroke-width=".3" font-family="Noto Sans CJK SC,sans-serif" textLength="48" lengthAdjust="spacingAndGlyphs">全球新能源充電卡</text></g><g fill="#e4e63c" transform="translate(34.4 8.4) scale(.82 1.08) translate(-34.4 -8.4)"><ellipse cx="34.4" cy="5.6" rx="1.3" ry="2.4"/><ellipse cx="34.4" cy="5.6" rx="1.3" ry="2.4" transform="rotate(72 34.4 8.4)"/><ellipse cx="34.4" cy="5.6" rx="1.3" ry="2.4" transform="rotate(144 34.4 8.4)"/><ellipse cx="34.4" cy="5.6" rx="1.3" ry="2.4" transform="rotate(216 34.4 8.4)"/><ellipse cx="34.4" cy="5.6" rx="1.3" ry="2.4" transform="rotate(288 34.4 8.4)"/></g><circle cx="34.4" cy="8.4" r="1" fill="#06923b"/><text x="1.6" y="30.6" font-size="10" font-weight="bold" font-style="italic" fill="#e9ea3a" stroke="#e9ea3a" stroke-width=".35" font-family="Liberation Serif,serif" textLength="15.8" lengthAdjust="spacingAndGlyphs" transform="rotate(-6 9 27)">2025</text><ellipse cx="32.4" cy="33.6" rx="6.3" ry="3.8" fill="#a9e0bf"/><ellipse cx="32.4" cy="33.2" rx="4" ry="2.1" fill="#e6f6ec"/><path d="M20.6 27.5c0-2 1-3.6 2.6-4.6l4.2-3.4c1.2-.9 2.8-1.2 4.2-.8l3.6 1c1 .3 1.6 1.2 1.5 2.2l-.5 4.6c-.1 1-.8 1.900-1.800 2.200l-6 2.200c-1.200.4-2.500.4-3.700-.1l-2.600-1c-.9-.4-1.500-1.300-1.500-2.300z" fill="#eef8f1"/><path d="M24.600 23.400l3.500-2.800c.7-.5 1.600-.7 2.400-.5l1.300.4-.6 3.600-5.200 2z" fill="#1f4a33"/><ellipse cx="27.300" cy="29.400" rx="1.500" ry="2" fill="#173c28"/><path d="M30.200 16.400c0-.8.600-1.400 1.400-1.400h1.500c.8 0 1.400.6 1.400 1.400V32h-4.300z" fill="#4fc184"/><rect x="31" y="16.300" width="1.300" height="14" fill="#9be3bb"/></svg></td><td class="nm">[虚拟] <a>全球新能源充電卡</a></td><td class="cat">新能源充電卡</td><td></td><td class="pr">5000</td><td>998</td><td>1 / 0</td><td class="w"><svg width="15" height="13" viewBox="0 0 15 13" style="vertical-align:middle"><path d="M0.3 7.300l2.300-2 2.900 2.900C8 5 11 2.100 14.200 0.100l.6.700C11.400 4 8.400 8.200 6.100 12.700z" fill="#4caf50"/></svg></td><td class="w kmc"><span class="km">卡密</span><i class="dot"></i></td><td class="act"><span class="edit">修改</span><span class="del">删除</span></td></tr><tr><td class="w"><i class="cb"></i></td><td>2</td><td class="w"><span class="srt">10000</span></td><td class="w"><svg width="40" height="40" viewBox="0 0 40 40" style="vertical-align:middle"><rect width="40" height="40" rx="1.6" fill="#06923b"/><text x="2" y="9.6" font-size="6.6" font-weight="bold" fill="#e3e84c" font-family="Liberation Sans,sans-serif" textLength="12.5" lengthAdjust="spacingAndGlyphs">3,000</text><text x="15.3" y="9.4" font-size="3.4" fill="#cfe05a" font-family="Liberation Sans,sans-serif" textLength="6" lengthAdjust="spacingAndGlyphs">HKD</text><g transform="translate(2 15.6) scale(.5)"><text x="0" y="0" font-size="6.4" font-weight="bold" fill="#e0e850" stroke="#e0e850" stroke-width=".3" font-family="Noto Sans CJK SC,sans-serif" textLength="48" lengthAdjust="spacingAndGlyphs">全球新能源充電卡</text></g><g fill="#e4e63c" transform="translate(34.4 8.4) scale(.82 1.08) translate(-34.4 -8.4)"><ellipse cx="34.4" cy="5.6" rx="1.3" ry="2.4"/><ellipse cx="34.4" cy="5.6" rx="1.3" ry="2.4" transform="rotate(72 34.4 8.4)"/><ellipse cx="34.4" cy="5.6" rx="1.3" ry="2.4" transform="rotate(144 34.4 8.4)"/><ellipse cx="34.4" cy="5.6" rx="1.3" ry="2.4" transform="rotate(216 34.4 8.4)"/><ellipse cx="34.4" cy="5.6" rx="1.3" ry="2.4" transform="rotate(288 34.4 8.4)"/></g><circle cx="34.4" cy="8.4" r="1" fill="#06923b"/><text x="1.6" y="30.6" font-size="10" font-weight="bold" font-style="italic" fill="#e9ea3a" stroke="#e9ea3a" stroke-width=".35" font-family="Liberation Serif,serif" textLength="15.8" lengthAdjust="spacingAndGlyphs" transform="rotate(-6 9 27)">2025</text><ellipse cx="32.4" cy="33.6" rx="6.3" ry="3.8" fill="#a9e0bf"/><ellipse cx="32.4" cy="33.2" rx="4" ry="2.1" fill="#e6f6ec"/><path d="M20.6 27.5c0-2 1-3.6 2.6-4.6l4.2-3.4c1.2-.9 2.8-1.2 4.2-.8l3.6 1c1 .3 1.6 1.2 1.5 2.2l-.5 4.6c-.1 1-.8 1.900-1.800 2.200l-6 2.200c-1.200.4-2.500.4-3.700-.1l-2.600-1c-.9-.4-1.500-1.300-1.500-2.300z" fill="#eef8f1"/><path d="M24.600 23.400l3.500-2.800c.7-.5 1.600-.7 2.400-.5l1.300.4-.6 3.600-5.200 2z" fill="#1f4a33"/><ellipse cx="27.300" cy="29.400" rx="1.500" ry="2" fill="#173c28"/><path d="M30.200 16.400c0-.8.600-1.400 1.400-1.400h1.500c.8 0 1.400.6 1.400 1.400V32h-4.300z" fill="#4fc184"/><rect x="31" y="16.300" width="1.300" height="14" fill="#9be3bb"/></svg></td><td class="nm">[虚拟] <a>全球新能源充電卡</a></td><td class="cat">新能源充電卡</td><td></td><td class="pr">3000</td><td>999</td><td>0 / 0</td><td class="w"><svg width="15" height="13" viewBox="0 0 15 13" style="vertical-align:middle"><path d="M0.3 7.300l2.300-2 2.900 2.900C8 5 11 2.100 14.200 0.100l.6.700C11.400 4 8.400 8.200 6.100 12.700z" fill="#4caf50"/></svg></td><td class="w kmc"><span class="km">卡密</span><i class="dot"></i></td><td class="act"><span class="edit">修改</span><span class="del">删除</span></td></tr><tr><td class="w"><i class="cb"></i></td><td>1</td><td class="w"><span class="srt">10000</span></td><td class="w"><svg width="40" height="40" viewBox="0 0 40 40" style="vertical-align:middle"><rect width="40" height="40" rx="1.6" fill="#06923b"/><text x="2" y="9.6" font-size="6.6" font-weight="bold" fill="#e3e84c" font-family="Liberation Sans,sans-serif" textLength="12.5" lengthAdjust="spacingAndGlyphs">1,000</text><text x="15.3" y="9.4" font-size="3.4" fill="#cfe05a" font-family="Liberation Sans,sans-serif" textLength="6" lengthAdjust="spacingAndGlyphs">HKD</text><g transform="translate(2 15.6) scale(.5)"><text x="0" y="0" font-size="6.4" font-weight="bold" fill="#e0e850" stroke="#e0e850" stroke-width=".3" font-family="Noto Sans CJK SC,sans-serif" textLength="48" lengthAdjust="spacingAndGlyphs">全球新能源充電卡</text></g><g fill="#e4e63c" transform="translate(34.4 8.4) scale(.82 1.08) translate(-34.4 -8.4)"><ellipse cx="34.4" cy="5.6" rx="1.3" ry="2.4"/><ellipse cx="34.4" cy="5.6" rx="1.3" ry="2.4" transform="rotate(72 34.4 8.4)"/><ellipse cx="34.4" cy="5.6" rx="1.3" ry="2.4" transform="rotate(144 34.4 8.4)"/><ellipse cx="34.4" cy="5.6" rx="1.3" ry="2.4" transform="rotate(216 34.4 8.4)"/><ellipse cx="34.4" cy="5.6" rx="1.3" ry="2.4" transform="rotate(288 34.4 8.4)"/></g><circle cx="34.4" cy="8.4" r="1" fill="#06923b"/><text x="1.6" y="30.6" font-size="10" font-weight="bold" font-style="italic" fill="#e9ea3a" stroke="#e9ea3a" stroke-width=".35" font-family="Liberation Serif,serif" textLength="15.8" lengthAdjust="spacingAndGlyphs" transform="rotate(-6 9 27)">2025</text><ellipse cx="32.4" cy="33.6" rx="6.3" ry="3.8" fill="#a9e0bf"/><ellipse cx="32.4" cy="33.2" rx="4" ry="2.1" fill="#e6f6ec"/><path d="M20.6 27.5c0-2 1-3.6 2.6-4.6l4.2-3.4c1.2-.9 2.8-1.2 4.2-.8l3.6 1c1 .3 1.6 1.2 1.5 2.2l-.5 4.6c-.1 1-.8 1.900-1.800 2.200l-6 2.200c-1.200.4-2.500.4-3.700-.1l-2.600-1c-.9-.4-1.500-1.300-1.500-2.300z" fill="#eef8f1"/><path d="M24.600 23.400l3.500-2.800c.7-.5 1.600-.7 2.400-.5l1.300.4-.6 3.600-5.200 2z" fill="#1f4a33"/><ellipse cx="27.300" cy="29.400" rx="1.500" ry="2" fill="#173c28"/><path d="M30.200 16.400c0-.8.600-1.400 1.400-1.400h1.500c.8 0 1.400.6 1.400 1.400V32h-4.300z" fill="#4fc184"/><rect x="31" y="16.300" width="1.300" height="14" fill="#9be3bb"/></svg></td><td class="nm">[虚拟] <a>全球新能源充電卡</a></td><td class="cat">新能源充電卡</td><td></td><td class="pr">1000</td><td>965</td><td>34 / 0</td><td class="w"><svg width="15" height="13" viewBox="0 0 15 13" style="vertical-align:middle"><path d="M0.3 7.300l2.300-2 2.900 2.900C8 5 11 2.100 14.200 0.100l.6.700C11.400 4 8.400 8.200 6.100 12.700z" fill="#4caf50"/></svg></td><td class="w kmc"><span class="km">卡密</span><i class="dot"></i></td><td class="act"><span class="edit">修改</span><span class="del">删除</span></td></tr></table><div class="abs" style="left:0;top:710px;width:1471px;height:15px;background:#fafafa"></div><div class="abs" style="left:17px;top:713px;width:1311px;height:9px;border-radius:5px;background:#8b8b8b"></div><div class="abs" style="left:4px;top:713px;width:0;height:0;border-top:4.5px solid transparent;border-bottom:4.5px solid transparent;border-right:5px solid #7a7a7a"></div><div class="abs" style="left:1460px;top:713px;width:0;height:0;border-top:4.5px solid transparent;border-bottom:4.5px solid transparent;border-left:5px solid #7a7a7a"></div></div><div class="panel abs" style="left:14px;top:805px;width:1471px;height:80px;background:#fafafa;box-shadow:-1px 0 0 #fafafa,0 1px 4px rgba(0,0,0,.08)"><i class="cb abs" style="left:19px;top:22px"></i><div class="pb abs" style="left:41px;width:94px">批量删除</div><div class="pb abs" style="left:143px;width:94px">更新排序</div><div class="pb abs" style="left:246px;width:94px">批量上架</div><div class="pb abs" style="left:348px;width:94px">批量下架</div><div class="pb abs" style="left:451px;width:94px">批量推荐</div><div class="pb abs" style="left:553px;width:94px">取消推荐</div><div class="pb abs" style="left:656px;width:122px">批量转移商品</div></div></div><div class="abs" style="left:1016px;top:470px;width:200px;height:75px;pointer-events:none">
<span class="abs" style="left:2px;top:1.5px;font-size:43px;line-height:52px;font-weight:bold;color:#1e6bb8;white-space:nowrap;letter-spacing:2.5px;transform:scaleY(.95);transform-origin:0 50%">源码</span>
<span class="abs" style="left:96.5px;top:6.5px;font-size:22.5px;line-height:28px;font-weight:bold;color:#595959;white-space:nowrap;letter-spacing:5px;transform:scaleY(.86);transform-origin:0 50%">社区</span>
<span class="abs" style="left:95.5px;top:28.5px;font-size:16.5px;line-height:20px;color:#3b82c9;white-space:nowrap;letter-spacing:-0.25px">C<span style="color:#f0b429">O</span>MMUNITY</span>
<span class="abs" style="left:-0.5px;top:51px;font-size:19px;line-height:22px;font-weight:bold;color:#1e6bb8;white-space:nowrap;font-family:'Liberation Serif',serif;letter-spacing:1.2px;transform:scaleX(1.075);transform-origin:0 50%">www.shequym.com</span>
</div><div class="abs" style="left:1752px;top:50px;width:2px;height:876px;background:#fafafa"></div></body></html>
